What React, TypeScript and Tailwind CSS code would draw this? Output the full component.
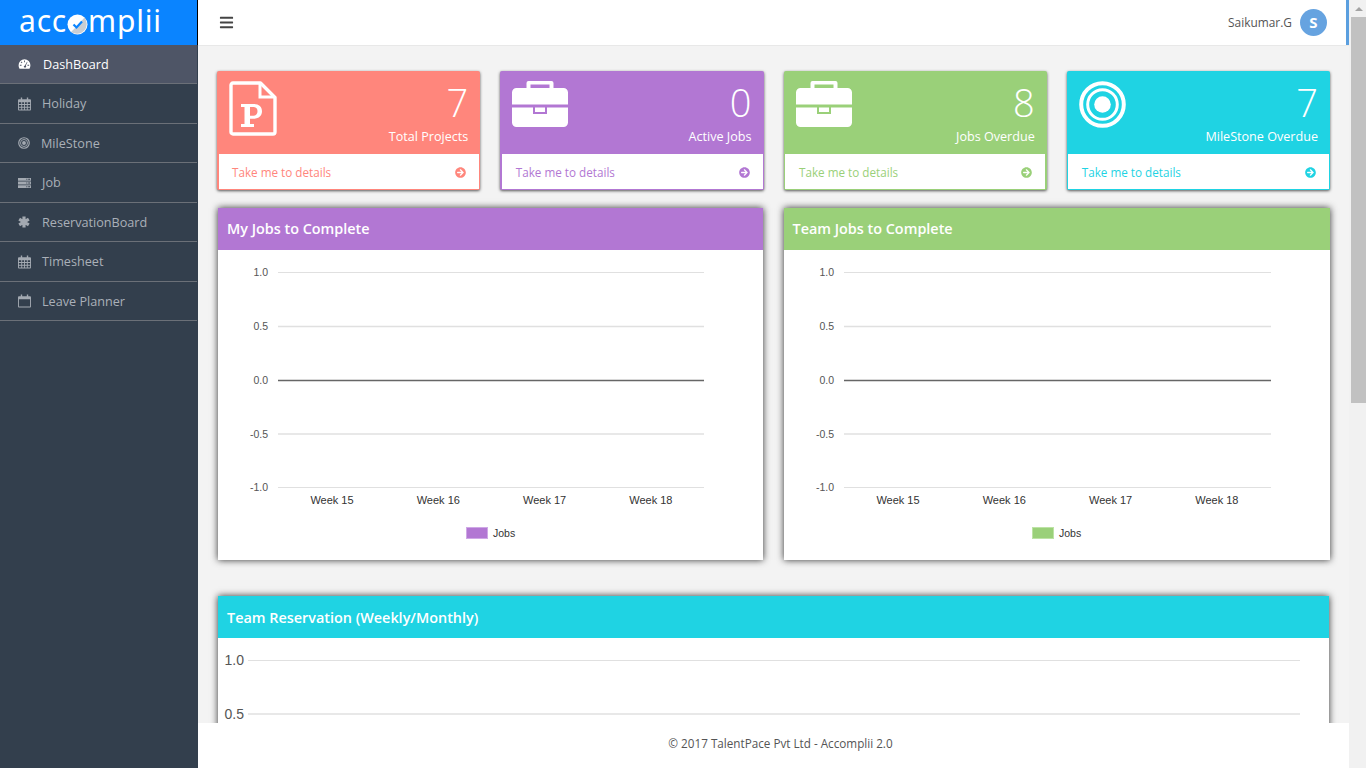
import React from "react";
import { FaArrowCircleRight, FaBars } from "react-icons/fa";

const Target = () => (
  <svg width="47" height="47" viewBox="0 0 47 47" fill="none" stroke="#fff">
    <circle cx="23.500" cy="23.500" r="21.300" strokeWidth="4" />
    <circle cx="23.500" cy="23.500" r="14.800" strokeWidth="3" />
    <circle cx="23.500" cy="23.500" r="8.300" fill="#fff" stroke="none" />
  </svg>
);

const PFile = () => (
  <svg width="48" height="55" viewBox="0 0 48 55" fill="none">
    <path d="M4 2h27.500L46 16.500V51a2 2 0 0 1-2 2H4a2 2 0 0 1-2-2V4a2 2 0 0 1 2-2z" stroke="#fff" strokeWidth="3.400" strokeLinejoin="round" />
    <path d="M31 3v13h14" stroke="#fff" strokeWidth="3" />
    <path fillRule="evenodd" fill="#fff" d="M12 23h13c5 0 8 3 8 7.300s-3 7.400-8 7.400h-4V43h4v3H12v-3h3.500V26H12zM21 26v8.700h3.500c2.500 0 4-1.700 4-4.400S27 26 24.500 26z" />
  </svg>
);

const Case = () => (
  <svg width="56" height="46" viewBox="0 0 56 46" fill="#fff">
    <path fillRule="evenodd" d="M16.500 0h23a2 2 0 0 1 2 2v6h-4V3.500h-19V8h-4V2a2 2 0 0 1 2-2z" />
    <path d="M4.500 7h47a4.500 4.500 0 0 1 4.500 4.500V23.500H0V11.500A4.500 4.500 0 0 1 4.500 7z" />
    <path fillRule="evenodd" d="M0 26.500h21v6.500h14v-6.500h21V41.500a4.500 4.500 0 0 1-4.500 4.500H4.500A4.500 4.500 0 0 1 0 41.500z" />
    <rect x="23" y="26.500" width="10" height="4.500" />
  </svg>
);

const IDash = () => (
  <svg width="13" height="11" viewBox="0 0 15 13" fill="currentColor">
    <path fillRule="evenodd" d="M7.500 1A7 7 0 0 1 14.500 8c0 1.500-.4 2.800-1.100 4H1.600A7.500 7.500 0 0 1 .5 8 7 7 0 0 1 7.500 1zM7 2.500v2h1v-2zM3 4.300l1.400 1.400.7-.7L3.700 3.600zM2 7.500v1h2v-1zM11 7.500v1h2v-1zM10.500 3.700L8 8.200c-.7.100-1.300.7-1.300 1.400 0 .8.700 1.400 1.400 1.400.8 0 1.400-.6 1.400-1.400 0-.4-.2-.8-.5-1l2-4.500z" />
  </svg>
);
const ICal = () => (
  <svg width="13" height="14" viewBox="0 0 14 14" fill="currentColor">
    <path fillRule="evenodd" d="M3 0h1.500v2H9.500V0H11v2h2a1 1 0 0 1 1 1v10a1 1 0 0 1-1 1H1a1 1 0 0 1-1-1V3a1 1 0 0 1 1-1h2zM1 5v2h2.500V5zM4.500 5v2h2V5zM7.500 5v2h2V5zM10.500 5v2H13V5zM1 8v2h2.500V8zM4.500 8v2h2V8zM7.500 8v2h2V8zM10.500 8v2H13V8zM1 11v2h2.500v-2zM4.500 11v2h2v-2zM7.500 11v2h2v-2zM10.500 11v2H13v-2z" />
  </svg>
);
const IRing = () => (
  <svg width="12" height="12" viewBox="0 0 13 13" fill="none" stroke="currentColor">
    <circle cx="6.500" cy="6.500" r="5.700" strokeWidth="1.300" />
    <circle cx="6.500" cy="6.500" r="3.800" strokeWidth="1" />
    <circle cx="6.500" cy="6.500" r="2.100" fill="currentColor" stroke="none" />
  </svg>
);
const IServer = () => (
  <svg width="13" height="11" viewBox="0 0 14 11" fill="currentColor">
    <path fillRule="evenodd" d="M0 0h14v3H0zM9 1v1h1V1zM11 1v1h2V1zM0 4h14v3H0zM9 5v1h1V5zM11 5v1h2V5zM0 8h14v3H0zM9 9v1h1V9zM11 9v1h2V9z" />
  </svg>
);
const IStar = () => (
  <svg width="12" height="12" viewBox="0 0 12 12" stroke="currentColor" strokeWidth="3.200" fill="none">
    <path d="M6 .5v11M1.200 3.200l9.600 5.600M10.800 3.200l-9.600 5.600" />
  </svg>
);
const ICalO = () => (
  <svg width="13" height="14" viewBox="0 0 14 14" fill="currentColor">
    <path fillRule="evenodd" d="M3 0h1.500v2H9.500V0H11v2h2a1 1 0 0 1 1 1v10a1 1 0 0 1-1 1H1a1 1 0 0 1-1-1V3a1 1 0 0 1 1-1h2zM1 5v8h12V5z" />
  </svg>
);

const nav = [
  { label: "DashBoard", Icon: IDash, active: true, cls: "pl-[43px] h-[39px] pt-[1px]" },
  { label: "Holiday", Icon: ICal, cls: "pl-[42px] h-[40px]" },
  { label: "MileStone", Icon: IRing, cls: "pl-[41px] h-[39px] pt-[1px]" },
  { label: "Job", Icon: IServer, cls: "pl-[42px] h-[40px]" },
  { label: "ReservationBoard", Icon: IStar, cls: "pl-[42px] h-[39px] pt-[1px]" },
  { label: "Timesheet", Icon: ICal, cls: "pl-[42px] h-[40px]" },
  { label: "Leave Planner", Icon: ICalO, cls: "pl-[42px] h-[39px] pt-[1px]" },
];

function StatCard(p: { value: string; label: string; bg: string; text: string; foot: string; icon: React.ReactNode }) {
  return (
    <div className={`h-[119px] rounded-[2px] ${p.bg} shadow-[0_1px_3px_rgba(0,0,0,0.65)] flex flex-col overflow-hidden`}>
      <div className="h-[83px] shrink-0 flex justify-between pl-[12px] pr-[12px] pt-[7px] text-white">
        <div className="pt-[3px]">{p.icon}</div>
        <div className="text-right">
          <div className="text-[38px] leading-[48px] font-[350]">{p.value}</div>
          <div className="text-[12.600px] leading-[18px] mt-[2px]">{p.label}</div>
        </div>
      </div>
      <div className={`h-[35px] bg-white flex items-center justify-between pt-[2px] text-[11.700px] font-normal ${p.foot} ${p.text}`}>
        <span>Take me to details</span>
        <FaArrowCircleRight size={11} />
      </div>
    </div>
  );
}

function MiniChart({ color, border, right }: { color: string; border: string; right: number }) {
  const ys = [272, 326, 380, 433.5, 487];
  const labels = ["1.0", "0.5", "0.0", "-0.5", "-1.0"];
  const weeks = ["Week 15", "Week 16", "Week 17", "Week 18"];
  return (
    <svg width="100%" height="310" className="block" style={{ fontFamily: "'Liberation Sans', sans-serif" }}>
      {ys.map((y, i) => (
        <g key={y} transform="translate(0 -250)">
          <line x1="60" x2={right} y1={y + 0.5} y2={y + 0.5} stroke={i === 2 ? "#666" : "#e0e0e0"} strokeWidth={i === 2 ? 1.4 : i % 2 ? 1.6 : 1} />
          <text x="50" y={y + 4} fontSize="10.500" fill="#555" textAnchor="end">{labels[i]}</text>
        </g>
      ))}
      <g transform="translate(0 -250)">
        {weeks.map((w, i) => (
          <text key={w} x={114 + i * 106.3} y={504} fontSize="11" fill="#333" textAnchor="middle">{w}</text>
        ))}
        <rect x="248.500" y="527.500" width="21" height="11" fill={color} stroke={border} />
        <text x="275" y="537" fontSize="10.500" fill="#333">Jobs</text>
      </g>
    </svg>
  );
}

function PanelHead({ title, bg, lead = "leading-[42px]" }: { title: string; bg: string; lead?: string }) {
  return (
    <div className={`h-[42px] ${bg} text-white font-semibold text-[14.400px] ${lead} px-[9px]`}>{title}</div>
  );
}

const panelShadow = "shadow-[0_0_7px_rgba(0,0,0,0.8)]";

export default function App() {
  return (
    <div className="h-screen w-[1366px] overflow-hidden flex bg-[#f3f3f3]" style={{ fontFamily: "'Open Sans', sans-serif" }}>
      <aside className="w-[198px] shrink-0 bg-[#333f4d] flex flex-col">
        <div className="h-[45px] bg-[#0a84ff] border-r border-black flex items-center pl-[19px]">
          <div className="flex items-baseline text-white text-[30px] leading-none tracking-[0.8px] -mt-[3px] font-normal" style={{ fontFamily: "'Noto Sans', sans-serif" }}>
            <span>acc</span>
            <svg width="21" height="21" viewBox="0 0 21 21" className="self-end mb-[1px]">
              <circle cx="10.500" cy="10.500" r="10" fill="#fff" />
              <path d="M17.500 3.500A10 10 0 0 1 4 18L10 12z" fill="#c9ced4" />
              <path d="M6.500 10.500l3 3 5.500-6" fill="none" stroke="#0a84ff" strokeWidth="2.200" />
            </svg>
            <span>mplii</span>
          </div>
        </div>
        <nav className="w-[197px]">
          {nav.map((n) => (
            <div
              key={n.label}
              className={`border-b border-[#6b7078] flex items-center relative ${n.cls} text-[12.650px] ${n.active ? "bg-[#4e5566] text-white" : "text-[#aab0b8]"}`}
            >
              <span className={`absolute left-[18px] top-1/2 -translate-y-1/2 ${n.active ? "text-white" : "text-[#a3a9b1]"}`}>
                <n.Icon />
              </span>
              {n.label}
            </div>
          ))}
        </nav>
      </aside>

      <div className="flex-1 flex flex-col min-w-0">
        <header className="h-[46px] shrink-0 bg-white border-b border-[#e8e8e8] flex">
          <div className="flex-1 flex items-center justify-between pl-[21px] pr-[19px]">
            <FaBars size={15} className="text-[#444]" />
            <div className="flex items-center gap-[8px]">
              <span className="text-[11.900px] text-[#555]">Saikumar.G</span>
              <div className="w-[27px] h-[27px] rounded-full bg-[#66a3e0] text-white text-[15px] font-bold flex items-center justify-center">S</div>
            </div>
          </div>
          <div className="w-[3px] bg-[#5b9fdf]" />
        </header>

        <main className="flex-1 overflow-hidden pl-[19px] pr-[19px] pt-[25px] min-h-0">
          <div className="grid grid-cols-4 gap-x-[20px]">
            <StatCard value="7" label="Total Projects" bg="bg-[#ff867c]" text="text-[#ff867c]" foot="ml-[2px] mr-[1px] mb-[1px] pl-[13px] pr-[13px]" icon={<PFile />} />
            <StatCard value="0" label="Active Jobs" bg="bg-[#b277d3]" text="text-[#b277d3]" foot="ml-[1.500px] mr-[1px] mb-[1px] pl-[14px] pr-[13px]" icon={<Case />} />
            <StatCard value="8" label="Jobs Overdue" bg="bg-[#9ad079]" text="text-[#9ad079]" foot="ml-[1.500px] mr-[2px] mb-[1px] pl-[14px] pr-[13px]" icon={<Case />} />
            <StatCard value="7" label="MileStone Overdue" bg="bg-[#1fd3e3]" text="text-[#1fd3e3]" foot="ml-[1px] mr-[1.500px] mb-[1px] pl-[14px] pr-[13px]" icon={<Target />} />
          </div>

          <div className="grid grid-cols-2 gap-x-[20px] mt-[18px]">
            <div className={`bg-white ${panelShadow} h-[352px] ml-[1px] mr-[1px]`}>
              <PanelHead title="My Jobs to Complete" bg="bg-[#b277d3]" />
              <MiniChart color="#b277d3" border="#cfa8e6" right={486} />
            </div>
            <div className={`bg-white ${panelShadow} h-[352px]`}>
              <PanelHead title="Team Jobs to Complete" bg="bg-[#9ad079]" />
              <MiniChart color="#9ad079" border="#bde3a5" right={487} />
            </div>
          </div>

          <div className={`bg-white ${panelShadow} mt-[36px] h-[300px] ml-[1px] mr-[1px]`}>
            <PanelHead title="Team Reservation (Weekly/Monthly)" bg="bg-[#1fd3e3]" lead="leading-[44px]" />
            <svg width="1111" height="100" viewBox="1 0 1111 100" className="block" style={{ fontFamily: "'Liberation Sans', sans-serif" }}>
              <line x1="31" x2="1083" y1="22.500" y2="22.500" stroke="#e0e0e0" />
              <line x1="31" x2="1083" y1="76" y2="76" stroke="#e0e0e0" strokeWidth="1.600" />
              <text x="27" y="27" fontSize="14" fill="#555" textAnchor="end">1.0</text>
              <text x="27" y="81" fontSize="14" fill="#555" textAnchor="end">0.5</text>
            </svg>
          </div>
        </main>

        <footer className="h-[45px] shrink-0 bg-white text-center text-[11.700px] leading-[41px] text-[#555] pl-[14px]">
          © 2017 TalentPace Pvt Ltd - Accomplii 2.0
        </footer>
      </div>

      <div className="w-[17px] shrink-0 bg-[#f1f1f1] flex flex-col pl-[2px]">
        <div className="h-[17px] flex items-center justify-center">
          <div className="w-0 h-0 border-l-[4px] border-r-[4px] border-b-[4px] border-l-transparent border-r-transparent border-b-[#a3a3a3]" />
        </div>
        <div className="h-[386px] bg-[#c1c1c1]" />
      </div>
    </div>
  );
}
